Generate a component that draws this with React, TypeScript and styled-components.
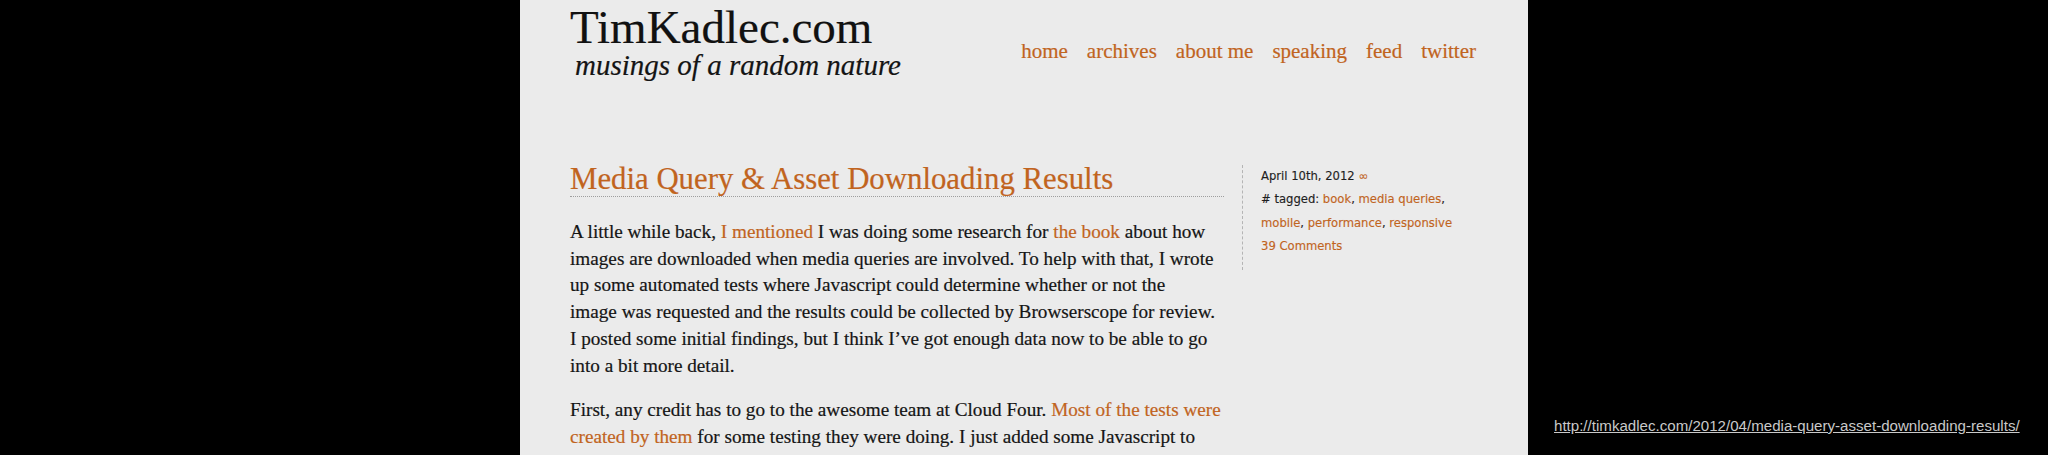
import styled, { createGlobalStyle } from "styled-components";

const GlobalStyle = createGlobalStyle`
	html,
	body {
		margin: 0;
		padding: 0;
		background: #000;
	}
`;

const accent = "#c1641e";

const Page = styled.div`
	display: flex;
	width: 2048px;
	height: 455px;
	overflow: hidden;
	background: #000;
`;

const Gutter = styled.div`
	width: 520px;
	flex-shrink: 0;
`;

const Caption = styled.div`
	width: 520px;
	flex-shrink: 0;
	display: flex;
	flex-direction: column;
	justify-content: flex-end;
	padding: 0 0 20px 26px;
	box-sizing: border-box;
`;

const SourceLink = styled.a`
	font-family: "Liberation Sans", Arial, sans-serif;
	font-size: 15.1px;
	line-height: 18px;
	color: #c9c9c9;
	text-decoration: underline;
	white-space: nowrap;
`;

const Sheet = styled.div`
	width: 1008px;
	flex-shrink: 0;
	background: #ebebeb;
	padding-left: 50px;
	box-sizing: border-box;
	font-family: "Liberation Serif", "Times New Roman", serif;
	-webkit-text-stroke: 0.2px;
`;

const Header = styled.header`
	display: flex;
	justify-content: space-between;
	align-items: flex-start;
	padding: 4px 52px 0 0;
`;

const Brand = styled.div`
	display: flex;
	flex-direction: column;
`;

const SiteName = styled.h1`
	margin: 0;
	font-size: 47px;
	line-height: 46px;
	font-weight: normal;
	color: #111;
`;

const Tagline = styled.div`
	margin: 1px 0 0 5px;
	font-size: 29px;
	line-height: 29px;
	font-style: italic;
	color: #141414;
`;

const Nav = styled.nav`
	display: flex;
	gap: 19px;
	padding-top: 37px;
`;

const NavLink = styled.a`
	font-size: 21px;
	line-height: 21px;
	color: ${accent};
	text-decoration: none;
	white-space: nowrap;
`;

const Main = styled.div`
	display: flex;
	align-items: flex-start;
	gap: 18px;
	margin-top: 83px;
`;

const Article = styled.article`
	width: 654px;
	flex-shrink: 0;
`;

const PostTitle = styled.h2`
	margin: 0;
	font-size: 30.8px;
	line-height: 33px;
	font-weight: normal;
	color: ${accent};
	border-bottom: 1px dotted #9e9e9e;
`;

const Paragraph = styled.p`
	margin: 0 0 18px;
	font-size: 19.2px;
	line-height: 26.7px;
	color: #151515;
	white-space: nowrap;

	&:first-of-type {
		margin-top: 22px;
	}
`;

const Link = styled.a`
	color: ${accent};
	text-decoration: none;
`;

const Meta = styled.aside`
	margin-top: 2px;
	padding: 0 0 12px 18px;
	border-left: 1px dashed #b4b4b4;
	font-family: "DejaVu Sans", Verdana, sans-serif;
	font-size: 11.6px;
	line-height: 23.3px;
	color: #1e1e1e;
	white-space: nowrap;
	-webkit-text-stroke: 0.15px;
`;

const MetaLine = styled.div``;

const App = () => {
	const nav = ["home", "archives", "about me", "speaking", "feed", "twitter"];

	return (
		<>
			<GlobalStyle />
			<Page>
				<Gutter />
				<Sheet>
					<Header>
						<Brand>
							<SiteName>TimKadlec.com</SiteName>
							<Tagline>musings of a random nature</Tagline>
						</Brand>
						<Nav>
							{nav.map((item) => (
								<NavLink key={item}>{item}</NavLink>
							))}
						</Nav>
					</Header>
					<Main>
						<Article>
							<PostTitle>Media Query &amp; Asset Downloading Results</PostTitle>
							<Paragraph>
								A little while back, <Link>I mentioned</Link> I was doing some research for{" "}
								<Link>the book</Link> about how
								<br />
								images are downloaded when media queries are involved. To help with that, I wrote
								<br />
								up some automated tests where Javascript could determine whether or not the
								<br />
								image was requested and the results could be collected by Browserscope for review.
								<br />
								I posted some initial findings, but I think I’ve got enough data now to be able to go
								<br />
								into a bit more detail.
							</Paragraph>
							<Paragraph>
								First, any credit has to go to the awesome team at Cloud Four.{" "}
								<Link>Most of the tests were</Link>
								<br />
								<Link>created by them</Link> for some testing they were doing. I just added some Javascript to
							</Paragraph>
						</Article>
						<Meta>
							<MetaLine>
								April 10th, 2012 <Link>∞</Link>
							</MetaLine>
							<MetaLine>
								# tagged: <Link>book</Link>, <Link>media queries</Link>,
							</MetaLine>
							<MetaLine>
								<Link>mobile</Link>, <Link>performance</Link>, <Link>responsive</Link>
							</MetaLine>
							<MetaLine>
								<Link>39 Comments</Link>
							</MetaLine>
						</Meta>
					</Main>
				</Sheet>
				<Caption>
					<SourceLink>http://timkadlec.com/2012/04/media-query-asset-downloading-results/</SourceLink>
				</Caption>
			</Page>
		</>
	);
};

export default App;
